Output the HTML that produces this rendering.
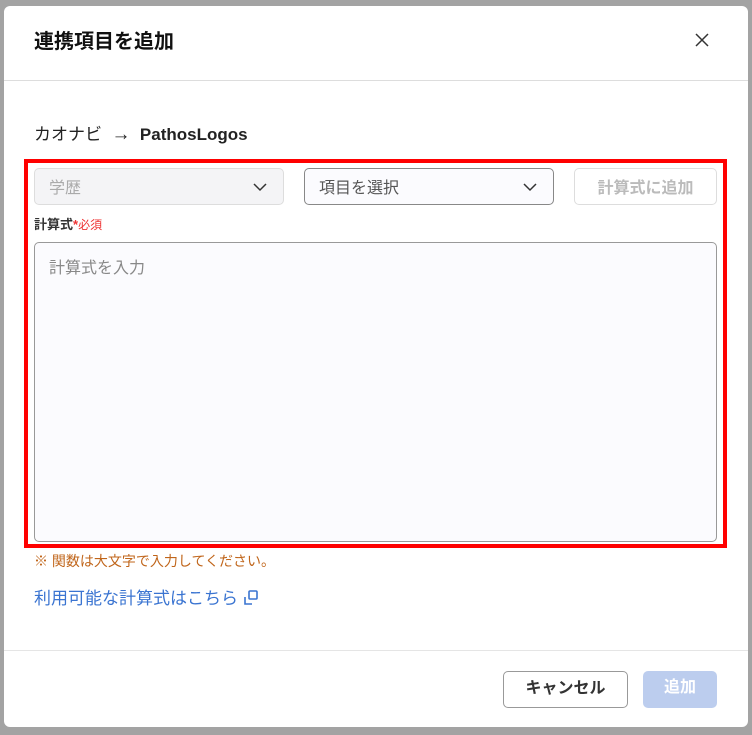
<!DOCTYPE html>
<html><head><meta charset="utf-8"><style>
*{box-sizing:border-box;margin:0;padding:0}
body{width:752px;height:735px;background:#a3a3a3;font-family:"Liberation Sans","Noto Sans CJK JP",sans-serif;position:relative;overflow:hidden;color:#222}
.m{position:absolute;left:4px;top:6px;width:744px;height:721px;background:#fff;border-radius:6px}
.t{position:absolute;left:30px;top:19px;font-size:20px;font-weight:bold;color:#111}
.x{position:absolute;left:690px;top:26px}
.hl{position:absolute;left:0;right:0;top:74px;border-top:1px solid #ddd}
.bc{position:absolute;left:30px;top:114px;font-size:17px}
.red{position:absolute;left:20px;top:153px;width:703px;height:389px;border:4px solid #f00}
.sel{position:absolute;height:37px;border-radius:5px;font-size:16px;padding:5px 14px}
.lab{position:absolute;left:30px;top:208px;font-size:13px;font-weight:bold;color:#333}
.ta{position:absolute;left:30px;top:236px;width:683px;height:300px;border:1px solid #999;border-radius:5px;background:#fbfbfe;padding:11px 14px;font-size:16px;color:#888}
.note{position:absolute;left:30px;top:545px;font-size:14px;color:#c0651a}
.lnk{position:absolute;left:30px;top:578px;font-size:17px;color:#3a74d1}
.fl{position:absolute;left:0;right:0;top:644px;border-top:1px solid #e5e5e5}
.b{position:absolute;top:665px;height:37px;border-radius:5px;font-size:16px;font-weight:bold;text-align:center;line-height:34px}
</style></head><body>
<div class="m">
<div class="t">連携項目を追加</div>
<svg class="x" width="16" height="16" viewBox="0 0 16 16"><path d="M2 2L14 14M14 2L2 14" stroke="#333" stroke-width="1.5"/></svg>
<div class="hl"></div>
<div class="bc">カオナビ &nbsp;<span style="font-size:19px">→</span>&nbsp; <b>PathosLogos</b></div>
<div class="red"></div>
<div class="sel" style="left:30px;top:162px;width:250px;background:#f4f4f6;border:1px solid #ddd;color:#aaa">学歴
<svg style="position:absolute;right:16px;top:14px" width="14" height="9" viewBox="0 0 14 9"><path d="M1 1L7 7L13 1" fill="none" stroke="#333" stroke-width="1.5"/></svg></div>
<div class="sel" style="left:300px;top:162px;width:250px;background:#fbfbfe;border:1px solid #888;color:#555">項目を選択
<svg style="position:absolute;right:16px;top:14px" width="14" height="9" viewBox="0 0 14 9"><path d="M1 1L7 7L13 1" fill="none" stroke="#333" stroke-width="1.5"/></svg></div>
<div class="sel" style="left:570px;top:162px;width:143px;border:1px solid #ddd;color:#bbb;font-weight:bold;text-align:center;padding:5px 0">計算式に追加</div>
<div class="lab">計算式<span style="color:#e33">*</span><span style="color:#e33;font-weight:normal;font-size:12px">必須</span></div>
<div class="ta">計算式を入力</div>
<div class="note">※ 関数は大文字で入力してください。</div>
<div class="lnk">利用可能な計算式はこちら <svg width="17" height="17" viewBox="0 0 17 17" style="vertical-align:-2px"><path d="M2 8v7h7" fill="none" stroke="#3a74d1" stroke-width="1.6"/><rect x="6" y="2" width="8" height="8" rx="1" fill="none" stroke="#3a74d1" stroke-width="1.6"/></svg></div>
<div class="fl"></div>
<div class="b" style="left:499px;width:125px;border:1px solid #999;background:#fff;color:#333">キャンセル</div>
<div class="b" style="left:639px;width:74px;background:#bccdee;color:#fff">追加</div>
</div>
</body></html>
